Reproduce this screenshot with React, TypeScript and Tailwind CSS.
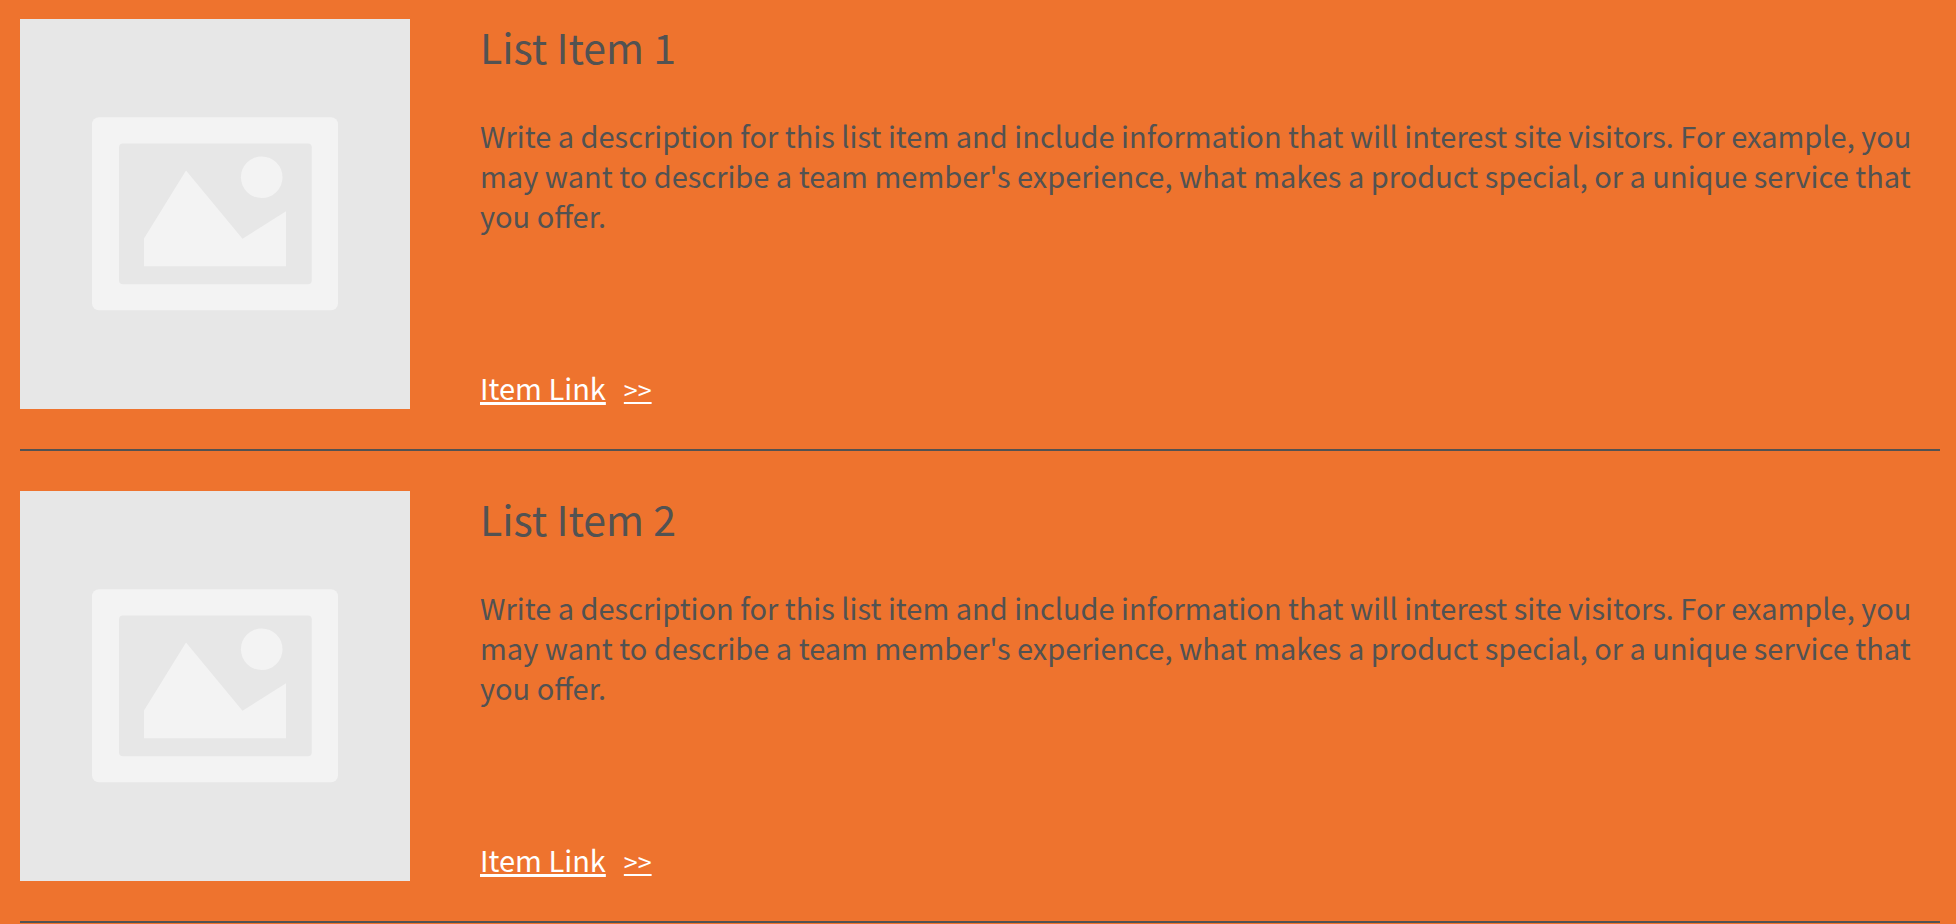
const description =
  "Write a description for this list item and include information that will interest site visitors. For example, you may want to describe a team member's experience, what makes a product special, or a unique service that you offer.";

const items = [
  { id: 1, title: 'List Item 1', description },
  { id: 2, title: 'List Item 2', description },
];

function Placeholder() {
  return (
    <svg viewBox="0 0 390 390" className="w-[390px] h-[390px] shrink-0 bg-[#e7e7e7]" aria-hidden="true">
      <rect x="72" y="98.3" width="246" height="193" rx="7" fill="#f3f3f3" />
      <rect x="99" y="124.6" width="192.8" height="140.6" rx="4" fill="#e7e7e7" />
      <circle cx="241.7" cy="158.3" r="20.8" fill="#f3f3f3" />
      <path d="M124 219.5 L166 151.5 L222.5 219.8 L266 192.3 V247.3 H124 Z" fill="#f3f3f3" />
    </svg>
  );
}

export default function App() {
  return (
    <main className="min-h-screen bg-[#ee732e] pt-[19px] pl-5 pr-4 text-[#525252] font-['Noto_Sans_CJK_SC',sans-serif]">
      <ul className="flex flex-col gap-10">
        {items.map((item) => (
          <li key={item.id} className="flex gap-[70px] pb-10 border-b-2 border-[#525252]">
            <Placeholder />

            <div className="flex flex-col flex-1 pr-5">
              <h2 className="text-[41px] leading-[54px] mb-[42px]">{item.title}</h2>

              <p className="text-[29px] leading-[40px]">{item.description}</p>

              <a href="#" className="flex items-baseline gap-[18px] mt-auto self-start leading-[40px] text-white">
                <span className="text-[29px] underline decoration-[3px] underline-offset-2">Item Link</span>
                <span className="text-[25px] underline decoration-2 underline-offset-2">&gt;&gt;</span>
              </a>
            </div>
          </li>
        ))}
      </ul>
    </main>
  );
}
